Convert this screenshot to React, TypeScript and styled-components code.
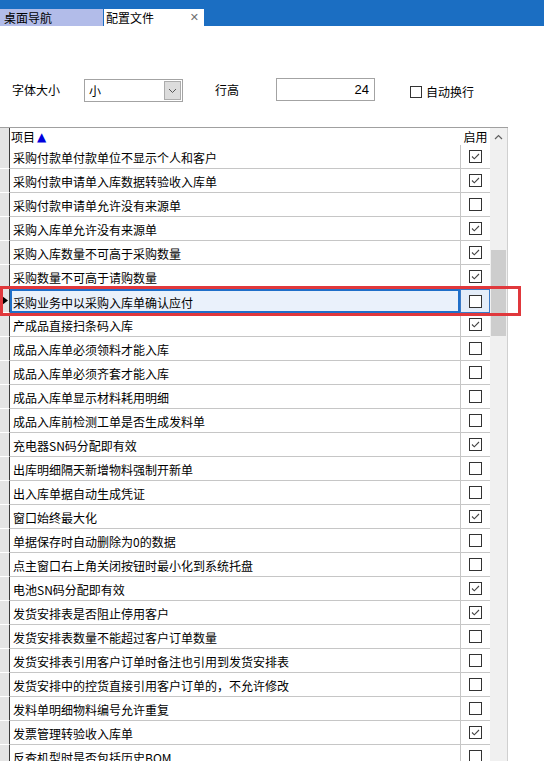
import React, { FC } from 'react';
import styled, { createGlobalStyle } from 'styled-components';

const GlobalStyle = createGlobalStyle`
  html, body {
    margin: 0;
    padding: 0;
    background: #ffffff;
    overflow: hidden;
  }
  body {
    font-family: "Noto Sans CJK SC", "Liberation Sans", sans-serif;
    font-size: 12px;
    color: #000000;
  }
`;

interface RowItem {
  label: string;
  on: boolean;
}

const rows: RowItem[] = [
  { label: '采购付款单付款单位不显示个人和客户', on: true },
  { label: '采购付款申请单入库数据转验收入库单', on: true },
  { label: '采购付款申请单允许没有来源单', on: false },
  { label: '采购入库单允许没有来源单', on: true },
  { label: '采购入库数量不可高于采购数量', on: true },
  { label: '采购数量不可高于请购数量', on: true },
  { label: '采购业务中以采购入库单确认应付', on: false },
  { label: '产成品直接扫条码入库', on: true },
  { label: '成品入库单必须领料才能入库', on: false },
  { label: '成品入库单必须齐套才能入库', on: false },
  { label: '成品入库单显示材料耗用明细', on: false },
  { label: '成品入库前检测工单是否生成发料单', on: false },
  { label: '充电器SN码分配即有效', on: true },
  { label: '出库明细隔天新增物料强制开新单', on: false },
  { label: '出入库单据自动生成凭证', on: false },
  { label: '窗口始终最大化', on: true },
  { label: '单据保存时自动删除为0的数据', on: false },
  { label: '点主窗口右上角关闭按钮时最小化到系统托盘', on: false },
  { label: '电池SN码分配即有效', on: true },
  { label: '发货安排表是否阻止停用客户', on: true },
  { label: '发货安排表数量不能超过客户订单数量', on: false },
  { label: '发货安排表引用客户订单时备注也引用到发货安排表', on: false },
  { label: '发货安排中的控货直接引用客户订单的，不允许修改', on: false },
  { label: '发料单明细物料编号允许重复', on: false },
  { label: '发票管理转验收入库单', on: true },
  { label: '反查机型时是否包括历史BOM', on: false },
];

const SELECTED = 6;

const Page = styled.div`
  width: 544px;
  height: 761px;
  overflow: hidden;
  display: flex;
  flex-direction: column;
`;

const TopBar = styled.div`
  height: 27px;
  box-sizing: border-box;
  padding-top: 9px;
  background: #1b6ec2;
  display: flex;
  gap: 1px;
`;

const Tab = styled.div<{ active?: boolean }>`
  width: ${({ active }) => (active ? '100px' : '103px')};
  height: 17px;
  box-sizing: border-box;
  padding-left: ${({ active }) => (active ? '2px' : '4px')};
  background: ${({ active }) => (active ? '#ffffff' : '#b2bce9')};
  display: flex;
  align-items: center;
  justify-content: space-between;
  padding-right: 5px;
  font-size: 12px;
  line-height: 17px;
`;

const CloseMark = styled.span`
  color: #707070;
  font-family: "DejaVu Sans", sans-serif;
  font-size: 11px;
`;

const Controls = styled.div`
  margin-top: 52px;
  height: 23px;
  display: flex;
  align-items: center;
  padding-left: 12px;
`;

const Label = styled.span<{ gap: number }>`
  margin-right: ${({ gap }) => gap}px;
  white-space: nowrap;
`;

const SelectBox = styled.div`
  width: 99px;
  height: 23px;
  box-sizing: border-box;
  border: 1px solid #a3a3a3;
  display: flex;
  align-items: center;
  justify-content: space-between;
  padding: 1px 1px 1px 4px;
  margin-right: 32px;
  margin-top: 2px;
`;

const DropButton = styled.div`
  width: 17px;
  height: 19px;
  box-sizing: border-box;
  border: 1px solid #acacac;
  background: #dcdcdc;
  display: flex;
  align-items: center;
  justify-content: center;
`;

const NumberBox = styled.div`
  width: 99px;
  height: 23px;
  box-sizing: border-box;
  border: 1px solid #a3a3a3;
  display: flex;
  align-items: center;
  justify-content: flex-end;
  padding-right: 5px;
  margin-right: 35px;
  font-family: "Liberation Sans", sans-serif;
  font-size: 13px;
`;

const WrapOption = styled.div`
  display: flex;
  align-items: center;
  gap: 4px;
  margin-top: 4px;
`;

const SmallBox = styled.span`
  width: 12px;
  height: 12px;
  box-sizing: border-box;
  border: 1px solid #333333;
  background: #ffffff;
  display: inline-block;
`;

const GridWrap = styled.div`
  position: relative;
  margin-top: 26px;
  width: 508px;
  display: flex;
  border-top: 1px solid #a0a0a0;
`;

const Table = styled.div`
  width: 490px;
  display: flex;
  flex-direction: column;
`;

const Row = styled.div<{ header?: boolean }>`
  height: ${({ header }) => (header ? '17px' : '24px')};
  display: grid;
  grid-template-columns: 10px 1fr 30px;
  flex-shrink: 0;
`;

const Indicator = styled.div<{ header?: boolean }>`
  background: #e4e4e4;
  border-right: 1px solid #3c3c3c;
  border-bottom: 1px solid ${({ header }) => (header ? '#e4e4e4' : '#ffffff')};
  box-sizing: border-box;
  display: flex;
  align-items: center;
  justify-content: center;
`;

const Cell = styled.div<{ header?: boolean; selected?: boolean }>`
  box-sizing: border-box;
  display: flex;
  align-items: center;
  padding-left: ${({ header }) => (header ? '1px' : '3px')};
  padding-top: ${({ header }) => (header ? '0' : '2px')};
  border-bottom: 1px solid ${({ header }) => (header ? '#000000' : '#c6c6c6')};
  background: ${({ selected }) => (selected ? '#eaf1fb' : '#ffffff')};
  ${({ selected }) =>
    selected &&
    `
    border: 2px solid #1f6fc9;
    padding-left: 1px;
  `}
  white-space: nowrap;
  overflow: hidden;
`;

const CheckCell = styled.div<{ header?: boolean; selected?: boolean }>`
  box-sizing: border-box;
  display: flex;
  align-items: center;
  justify-content: center;
  border-left: 1px solid ${({ header }) => (header ? '#ffffff' : '#c6c6c6')};
  border-bottom: 1px solid ${({ header }) => (header ? '#000000' : '#c6c6c6')};
  background: ${({ selected }) => (selected ? '#e4edf9' : '#ffffff')};
  ${({ selected }) =>
    selected &&
    `
    border: 1px solid #3a7bc8;
  `}
`;

const SortArrow = styled.span`
  color: #0000dd;
  font-size: 12px;
  margin-left: 2px;
  font-family: "DejaVu Sans", sans-serif;
`;

const ScrollBar = styled.div`
  width: 18px;
  background: #f0f0f0;
  border-right: 1px solid #d0d0d0;
  box-sizing: border-box;
  position: relative;
  display: flex;
  flex-direction: column;
  align-items: center;
`;

const ScrollArrow = styled.div`
  height: 17px;
  display: flex;
  align-items: center;
  justify-content: center;
`;

const Thumb = styled.div`
  position: absolute;
  left: 1px;
  right: 1px;
  top: 122px;
  height: 86px;
  background: #cdcdcd;
`;

const Highlight = styled.div`
  position: absolute;
  left: 0;
  top: 158px;
  width: 521px;
  height: 30px;
  box-sizing: border-box;
  border: 3px solid #e0383c;
  pointer-events: none;
`;

const CheckBox: FC<{ on: boolean }> = ({ on }) => (
  <svg width="13" height="13" viewBox="0 0 13 13">
    <rect x="0.5" y="0.5" width="12" height="12" fill="#ffffff" stroke="#333333" />
    {on && (
      <path d="M3 6.5 L5.3 8.8 L10 4" fill="none" stroke="#444444" strokeWidth="1.1" />
    )}
  </svg>
);

const App: FC = () => {
  return (
    <Page>
      <GlobalStyle />
      <TopBar>
        <Tab>桌面导航</Tab>
        <Tab active>
          配置文件
          <CloseMark>✕</CloseMark>
        </Tab>
      </TopBar>

      <Controls>
        <Label gap={24}>字体大小</Label>
        <SelectBox>
          <span>小</span>
          <DropButton>
            <svg width="9" height="6" viewBox="0 0 9 6">
              <path d="M1 1 L4.5 4.5 L8 1" fill="none" stroke="#555555" strokeWidth="1" />
            </svg>
          </DropButton>
        </SelectBox>
        <Label gap={37}>行高</Label>
        <NumberBox>24</NumberBox>
        <WrapOption>
          <SmallBox />
          <span>自动换行</span>
        </WrapOption>
      </Controls>

      <GridWrap>
        <Table>
          <Row header>
            <Indicator header />
            <Cell header>
              项目<SortArrow>▲</SortArrow>
            </Cell>
            <CheckCell header>启用</CheckCell>
          </Row>
          {rows.map((r, i) => (
            <Row key={r.label}>
              <Indicator>
                {i === SELECTED && (
                  <svg width="6" height="9" viewBox="0 0 6 9">
                    <path d="M0 0 L6 4.5 L0 9 Z" fill="#000000" />
                  </svg>
                )}
              </Indicator>
              <Cell selected={i === SELECTED}>{r.label}</Cell>
              <CheckCell selected={i === SELECTED}>
                <CheckBox on={r.on} />
              </CheckCell>
            </Row>
          ))}
        </Table>
        <ScrollBar>
          <ScrollArrow>
            <svg width="9" height="6" viewBox="0 0 9 6">
              <path d="M1 5 L4.5 1.5 L8 5" fill="none" stroke="#606060" strokeWidth="1.2" />
            </svg>
          </ScrollArrow>
          <Thumb />
        </ScrollBar>
        <Highlight />
      </GridWrap>
    </Page>
  );
};

export default App;
